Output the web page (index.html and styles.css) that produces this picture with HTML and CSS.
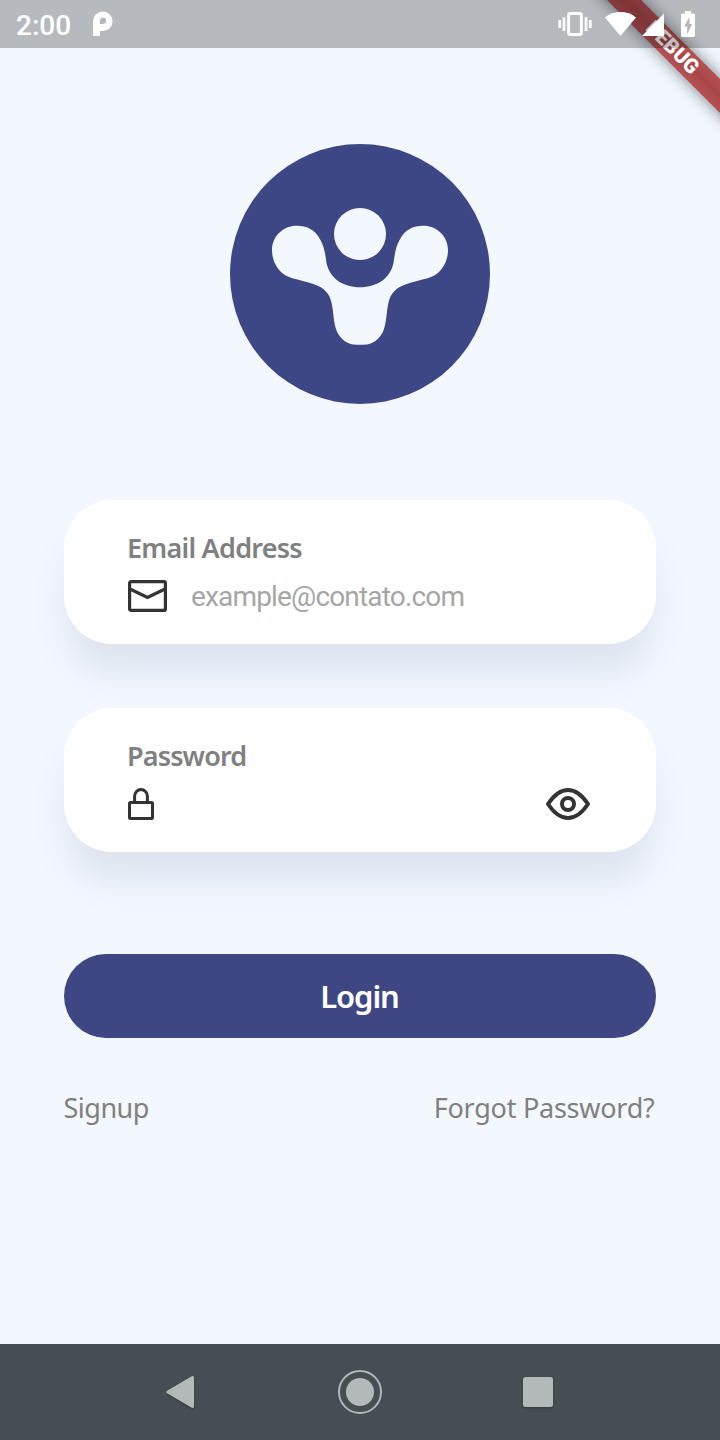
FILE: index.html
```
<!DOCTYPE html>
<html lang="en">
<head>
<meta charset="utf-8">
<title>Login</title>
<link rel="stylesheet" href="styles.css">
</head>
<body>
<div class="screen">
  <div class="ribbon"><span class="ribbon-text">DEBUG</span></div>
  <header class="status">
    <span class="clock">2:00</span>
    <svg class="app-icon" width="20" height="26" viewBox="0 0 20 26"><path fill="#fff" fill-rule="evenodd" d="M0 25V10.500A9.800 9.700 0 1 1 9.800 20H7V25ZM9.800 6.500A3.500 3.500 0 0 0 6.800 9V13H9.800A3.200 3.200 0 0 0 9.800 6.500Z"/></svg>
    <div class="status-icons">
      <svg width="34" height="26" viewBox="0 0 34 26"><path d="M1.700 9V17M6 6.200V20M28 6.200V20M32.300 9V17" stroke="#fff" stroke-opacity=".92" stroke-width="2.800" fill="none"/><rect x="10.600" y="2.400" width="12.800" height="21.200" rx="1.800" fill="none" stroke="#fff" stroke-opacity=".95" stroke-width="3"/></svg>
      <svg class="wifi" width="32" height="26" viewBox="0 0 32 26"><path fill="#fff" d="M0 6.500C9 -.8 22.500 -.8 31 6.500L15.500 25Z"/></svg>
      <svg class="signal" width="22" height="26" viewBox="0 0 22 26"><path fill="#fff" d="M22 2.500V25H0Z"/></svg>
      <svg class="battery" width="14" height="26" viewBox="0 0 14 26"><path fill="#fff" fill-rule="evenodd" d="M4 0H10V2.500H12.600Q14 2.500 14 4V24.600Q14 26 12.600 26H1.400Q0 26 0 24.600V4Q0 2.500 1.400 2.500H4ZM8.500 6L3 15.500H6.200V23L11.200 13H8.500Z"/></svg>
    </div>
  </header>

  <main class="content">
    <svg class="logo" width="260" height="260" viewBox="30 30 780 780">
      <circle cx="420" cy="420" r="390" fill="#3e4785"/>
      <circle cx="420" cy="300" r="78" fill="#f3f8ff"/>
      <path fill="#f3f8ff" d="M156 348C156 306 190 275 230 275C262 275 285 288 298 312C314 338 316 362 319 385C328 432 368 460 420 460C472 460 512 432 521 385C524 362 526 338 542 312C555 288 578 275 610 275C650 275 684 306 684 348C684 378 670 402 656 415C632 437 600 436 560 450C528 460 510 480 505 508C499 535 500 568 489 593C476 618 456 632 430 632H410C384 632 364 618 351 593C340 568 341 535 335 508C330 480 312 460 280 450C240 436 208 437 184 415C170 402 156 378 156 348Z"/>
    </svg>

    <section class="card">
      <div class="label label-email">Email Address</div>
      <div class="field">
        <svg width="40" height="32" viewBox="0 0 40 32"><g fill="none" stroke="#333" stroke-width="3.200"><rect x="1.600" y="1.600" width="35.800" height="28.800" rx="1.500"/><path d="M2 9L19.500 17.500L37 9"/></g></svg>
        <span class="hint">example@contato.com</span>
      </div>
    </section>

    <section class="card">
      <div class="label label-password">Password</div>
      <div class="field">
        <svg width="26" height="32" viewBox="0 0 26 32"><g fill="none" stroke="#333" stroke-width="3"><rect x="1.500" y="14.500" width="23" height="16" rx="1"/><path d="M6.600 14V8.300A6.400 6.800 0 0 1 19.400 8.300V14"/></g></svg>
        <svg class="eye" width="44" height="32" viewBox="0 0 44 32"><g fill="none" stroke="#333" stroke-width="4"><path stroke-linejoin="round" d="M2 16C7 8.500 14 2 22 2S37 8.500 42 16C37 23.500 30 30 22 30S7 23.500 2 16Z"/><circle cx="22" cy="16" r="6"/></g></svg>
      </div>
    </section>

    <div class="login"><span class="login-text">Login</span></div>
    <div class="links"><span class="signup">Signup</span><span class="forgot">Forgot Password?</span></div>
  </main>

  <nav class="nav">
    <svg class="nav-icon" width="30" height="36" viewBox="0 0 30 36"><path fill="#b3b8b9" stroke="#b3b8b9" stroke-width="3" stroke-linejoin="round" d="M1.800 18L26.500 3.600V32.400Z"/></svg>
    <svg width="44" height="44" viewBox="0 0 44 44"><circle cx="22" cy="22" r="21" fill="none" stroke="#b3b8b9" stroke-width="2"/><circle cx="22" cy="22" r="14" fill="#b3b8b9"/></svg>
    <svg class="nav-icon" width="30" height="30" viewBox="0 0 30 30"><rect width="30" height="30" rx="2.500" fill="#b3b8b9"/></svg>
  </nav>
</div>
</body>
</html>
```
FILE: styles.css
```
* { box-sizing: border-box; }
body { margin: 0; }
svg { display: block; flex: none; }
.screen {
  position: relative;
  width: 720px;
  height: 1440px;
  overflow: hidden;
  display: flex;
  flex-direction: column;
  background: #f3f8ff;
  font-family: "Noto Sans", "Open Sans", sans-serif;
}
.ribbon {
  position: absolute;
  left: 572px;
  top: 36px;
  width: 200px;
  height: 24px;
  transform: rotate(45deg);
  background: linear-gradient(#b75054, #a74648 50%, #b75054);
  box-shadow: 0 0 16px rgba(0, 0, 0, .5);
  display: flex;
  align-items: center;
  justify-content: center;
}
.ribbon-text {
  margin-top: -2px;
  font: 900 20.4px/24px Roboto, sans-serif;
  color: #fff;
}
.status {
  position: relative;
  height: 48px;
  flex: none;
  display: flex;
  align-items: center;
  padding: 0 25px 0 16px;
  background: rgba(0, 0, 0, .25);
}
.clock {
  width: 77px;
  font: 500 28px/48px Roboto, sans-serif;
  padding-top: 3px;
  color: #fff;
}
.status-icons { display: flex; margin-left: auto; }
.wifi { margin-left: 13px; }
.signal { margin-left: 5px; }
.battery { margin-left: 17px; }
.content {
  flex: 1;
  display: flex;
  flex-direction: column;
  padding: 96px 64px 0;
}
.logo { align-self: center; margin-bottom: 96px; }
.card {
  height: 144px;
  margin-bottom: 64px;
  padding: 32px 64px;
  border-radius: 48px;
  background: #fff;
  box-shadow: 0 32px 36px -2px #dee4f0;
}
.label {
  height: 32px;
  margin-left: -1px;
  font-size: 27px;
  line-height: 32px;
  font-weight: 600;
  color: #808080;
  white-space: nowrap;
}
.label-email { letter-spacing: -.75px; }
.label-password { letter-spacing: -.85px; }
.field {
  height: 32px;
  margin-top: 16px;
  display: flex;
  align-items: center;
}
.hint {
  margin-left: 23px;
  padding-top: 2px;
  font: 400 28px/32px Roboto, sans-serif;
  letter-spacing: -.83px;
  color: #a6a6a6;
}
.eye { margin-left: auto; margin-right: 2px; }
.login {
  height: 84px;
  margin-top: 38px;
  border-radius: 42px;
  background: #3e4684;
  display: flex;
  align-items: center;
  justify-content: center;
  color: #fff;
  font-size: 31px;
  font-weight: 600;
}
.login-text { letter-spacing: -1.1px; margin-right: 1px; }
.links {
  margin-top: 54px;
  display: flex;
  justify-content: space-between;
  font-size: 27px;
  line-height: 32px;
  color: #808080;
}
.signup { margin-left: -.5px; letter-spacing: -.5px; }
.forgot { margin-right: 1.500px; letter-spacing: -.25px; }
.nav {
  height: 96px;
  flex: none;
  display: flex;
  align-items: center;
  justify-content: space-between;
  padding: 0 167px 0 166px;
  background: #464e54;
}
.nav-icon { filter: drop-shadow(0 1px 1px rgba(0, 0, 0, .3)); }
.nav-icon:last-child { margin-left: -1px; }
```
